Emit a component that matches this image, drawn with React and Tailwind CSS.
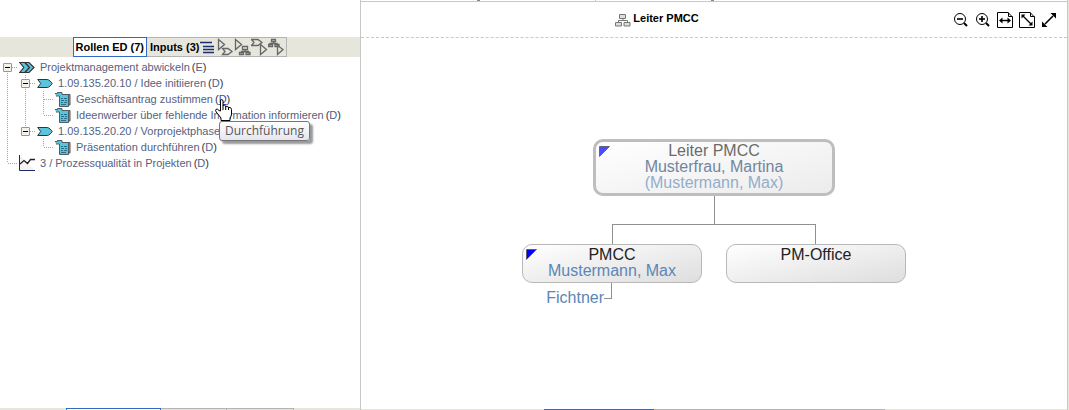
import React, { useState } from "react";

const treeRows = [
  { id: 1, level: 0, icon: "process", label: "Projektmanagement abwickeln", role: "E", open: true, guides: [] },
  { id: 2, level: 1, icon: "phase", label: "1.09.135.20.10 / Idee initiieren", role: "D", open: true, guides: [true] },
  { id: 3, level: 2, icon: "task", label: "Geschäftsantrag zustimmen", role: "D", guides: [true, true], hovered: true },
  { id: 4, level: 2, icon: "task", label: "Ideenwerber über fehlende Information informieren", role: "D", guides: [true, true], last: true },
  { id: 5, level: 1, icon: "phase", label: "1.09.135.20.20 / Vorprojektphase", role: "D", open: true, guides: [true], last: true },
  { id: 6, level: 2, icon: "task", label: "Präsentation durchführen", role: "D", guides: [true, false], last: true },
  { id: 7, level: 0, icon: "chart", label: "3 / Prozessqualität in Projekten", role: "D", guides: [], last: true },
];

const GuideLine = ({ to = 16, branch = false, visible = true }) => (
  <svg className="h-4 w-[18px] shrink-0" viewBox="0 0 18 16" fill="none" stroke="#a9a58e" strokeDasharray="1 1">
    {visible && <path d={`M7.5 0V${to}`} />}
    {branch && <path d="M8 8.5H18" />}
  </svg>
);

const Expander = ({ label, first, last }) => (
  <button type="button" aria-label={`${label} zuklappen`} className="h-4 w-[18px] shrink-0">
    <svg className="h-4 w-[18px]" viewBox="0 0 18 16" fill="none">
      <path
        d={`M7.5 ${first ? 8 : 0}V${last ? 14 : 16}M12 8.5H18`}
        stroke="#a9a58e"
        strokeDasharray="1 1"
      />
      <rect x="3.5" y="4.5" width="8" height="8" rx=".5" fill="#f4f2ea" stroke="#8298b5" />
      <path d="M5 8.5H10" stroke="#000" />
    </svg>
  </button>
);

const NodeIcon = ({ type }) => (
  <svg className="ml-px h-4 w-4 shrink-0" viewBox="0 0 16 16" fill="none">
    {type === "process" && (
      <g fill="#5cc3dd" stroke="#333" strokeWidth="1.2">
        <path d="M.8 3.500h5l5 5-5 5h-5l4-5z" />
        <path d="M6 3.500h4l5 5-5 5H6l4.500-5z" />
      </g>
    )}
    {type === "phase" && (
      <path d="M.7 4.500h9.500c2 0 4 2.500 5 4-1 1.500-3 4-5 4H.7l3-4z" fill="#5cc3dd" stroke="#333" />
    )}
    {type === "task" && (
      <g>
        <path d="M5 3.500h10v10.500H13" fill="#9a9a9a" stroke="#555" />
        <path d="M4.500 3.500h9v12h-9z" fill="#5cc3dd" stroke="#4c5f66" />
        <path d="M0 2.500h2.500v-1H7v3.500H1z" fill="#5cc3dd" />
        <path d="M0 2.500h2.500v-1H7v2M1 5h3.500" stroke="#4c5f66" />
        <path d="M6 7.500h2M9 7.500h3M6 9.500h3M10 9.500h2M6 11.500h2M9 11.500h3M6 13.500h5" stroke="#2a6f86" />
      </g>
    )}
    {type === "chart" && (
      <g>
        <path d="M.5 0v15.500H16" stroke="#1f2b66" fill="#f3f3f3" />
        <path d="M1 9l4-3.500 3.500 3 3-4H16" stroke="#222" strokeWidth="1.300" />
      </g>
    )}
  </svg>
);

const HandCursor = () => (
  <svg
    className="pointer-events-none absolute top-2 left-0 z-20 h-[22px] w-[17px]"
    viewBox="0 0 17 22"
    fill="#fff"
    stroke="#000"
  >
    <path d="M5.500 12V2Q5.500.5 6.500.5 8 .5 8 2v5q0-1 1.500-.7Q10.700 6.500 10.700 8q0-1 1.500-.7 1.300.2 1.300 1.700 0-1 1.500-.5 1.500.5 1.500 2V15q0 2-1.500 4v2.500h-9V19L1.200 13Q0 11 1 10.300q1.500-.8 3 1.200z" />
    <path d="M8 7v4M10.700 8v3M13.500 9v2" />
  </svg>
);

const RoleLink = ({ role, hovered }) => (
  <span className="relative ml-[2px] text-[#333344]">
    (
    <a href="#rolle" className={hovered ? "text-[#4444bb] underline" : "text-[#4c5e8c]"}>
      {role}
    </a>
    )
    {hovered && (
      <>
        <HandCursor />
        <span
          role="tooltip"
          className="absolute top-[30px] left-1 z-10 rounded-[3px] border border-[#767676] bg-linear-to-b from-white to-[#e4e5f0] px-[5px] font-['Open_Sans',sans-serif] text-[12px] leading-[18px] text-[#575757] shadow-[3px_3px_2px_rgba(0,0,0,0.4)]"
        >
          Durchführung
        </span>
      </>
    )}
  </span>
);

const TreeRow = ({ row }) => (
  <li className="flex h-4 items-center whitespace-nowrap">
    {row.guides.map((visible, i) => (
      <GuideLine key={i} visible={visible} />
    ))}
    {row.open ? (
      <Expander label={row.label} first={row.level === 0} last={row.last} />
    ) : (
      <GuideLine to={row.last ? 8 : 16} branch />
    )}
    <NodeIcon type={row.icon} />
    <a href="#prozess" className="ml-[5px] text-[#56627f]">
      {row.label}
    </a>
    <RoleLink role={row.role} hovered={row.hovered} />
  </li>
);

const toolbarIcons = [
  { name: "Folgeprozess", paths: ["M1.500 1.500l6 5-6 5z", "M5.500 10.500h5.500l4 3-4 3H5.500l2.500-3z"] },
  { name: "Folgerolle", paths: ["M1.500 1.500l6 5-6 5z", "M8.500 8.500h5v3h-5zM11 11.500v2M7.500 15.500v-2h7v2M5.500 14.500h4v2h-4zM12 14.500h4v2h-4z"] },
  { name: "Vorprozess", paths: ["M.5 1.500H7l4 3-4 3H.5l2.500-3z", "M9.500 6.500l6 5-6 5z"] },
  { name: "Vorrolle", paths: ["M3.500 1.500h4v2h-4zM5.500 3.500v2M2 7.500v-2h7v2M.5 6.500h4v2h-4zM7 6.500h4v2H7z", "M9.500 7.500l5.500 4-5.500 5z"] },
];

const Toolbar = ({ setTab }) => (
  <div className="flex h-5 items-stretch justify-center bg-[#e6e6dc] text-[11px] font-bold text-black">
    <button
      type="button"
      onClick={() => setTab("rollen")}
      className="border border-[#316ac5] bg-white px-[2px]"
    >
      Rollen ED (7)
    </button>
    <div className="flex items-center border border-l-0 border-[#b4b4b4] pr-px pl-[3px]">
      <button type="button" onClick={() => setTab("inputs")}>
        Inputs (3)
      </button>
      <button type="button" aria-label="Liste" className="mr-[3px] ml-px">
        <svg className="h-4 w-[14px]" viewBox="0 0 14 16" stroke="#1c2f70" strokeWidth="1.400">
          <path d="M0 3.500h12M3 7.500h11M3 10.500h11M3 13.500h11" />
        </svg>
      </button>
      {toolbarIcons.map((icon) => (
        <button key={icon.name} type="button" aria-label={icon.name}>
          <svg className="h-[18px] w-[17px]" viewBox="0 0 17 18" fill="none" stroke="#666" strokeWidth="1.300">
            {icon.paths.map((d) => (
              <path key={d} d={d} />
            ))}
          </svg>
        </button>
      ))}
    </div>
  </div>
);

const OrgIcon = () => (
  <svg className="h-[14px] w-4 shrink-0" viewBox="0 0 16 14" fill="#ddd" stroke="#777">
    <path d="M8 5v2M3.500 9.500v-2h9v2" fill="none" />
    <path d="M4.500 1.500h6v4h-6zM.5 9.500h6v3.500h-6zM9 9.500h6v3.500H9z" />
  </svg>
);

const ZoomIcon = ({ plus }) => (
  <svg className="h-4 w-4" viewBox="0 0 16 16" fill="none" stroke="#000">
    <circle cx="7" cy="7" r="5.500" />
    <path d="M4 7h6" strokeWidth="1.600" />
    {plus && <path d="M7 4v6" strokeWidth="1.600" />}
    <path d="M11 11l3 3" strokeWidth="2" />
  </svg>
);

const PageIcon = ({ diagonal }) => (
  <svg className="h-4 w-4" viewBox="0 0 16 16" fill="none" stroke="#000">
    <path d="M.5.5H11L15.500 5v10.500H.5z" />
    <path d="M11.500.5v4h4" />
    {diagonal ? (
      <>
        <path d="M4 4l8 8" strokeWidth="1.200" />
        <path d="M2.500 2.500h4l-4 4zM13.500 13.500h-4l4-4z" fill="#000" stroke="none" />
      </>
    ) : (
      <>
        <path d="M4 8.500h8" strokeWidth="1.400" />
        <path d="M2 8.500L5.500 5.500v6zM14 8.500l-3.500-3v6z" fill="#000" stroke="none" />
      </>
    )}
  </svg>
);

const FullscreenIcon = () => (
  <svg className="h-4 w-4" viewBox="0 0 16 16">
    <path d="M4 12l8-8" stroke="#000" strokeWidth="1.600" />
    <path d="M15 1v5.500L9.500 1zM1 15V9.500L6.500 15z" />
  </svg>
);

const Marker = ({ fill }) => (
  <svg className="absolute top-1 left-[3px] h-[11px] w-[12px]" viewBox="0 0 12 11">
    <path d="M.5.5h10l-10 10z" fill={fill} stroke="#555" strokeWidth=".8" />
  </svg>
);

const OrgChart = () => (
  <div className="flex flex-1 flex-col items-center pt-[101px] text-center text-[16px] leading-4">
    <div className="relative h-[57px] w-[242px] rounded-[10px] border-3 border-[#bebebe] bg-linear-to-br from-white to-[#ececec] pt-px">
      <Marker fill="#4c4cff" />
      <div className="text-[#6b6b6b]">Leiter PMCC</div>
      <div className="text-[#70869f]">Musterfrau, Martina</div>
      <div className="text-[#93adcb]">(Mustermann, Max)</div>
    </div>

    {/* Connectors */}
    <div className="h-7 w-px bg-[#909090]" />
    <div className="h-5 w-[204px] border border-b-0 border-[#909090]" />

    <div className="flex items-start gap-6">
      <div className="w-[180px]">
        <div className="relative h-[39px] rounded-[10px] border border-[#b8b8b8] bg-linear-to-br from-white to-[#dedede] pt-[2px]">
          <Marker fill="#0000ff" />
          <div className="text-[#222222]">PMCC</div>
          <div className="text-[#5b86b6]">Mustermann, Max</div>
        </div>
        <div className="flex w-1/2 items-start justify-end">
          <span className="pt-[7px] text-[#5b86b6]">Fichtner</span>
          <div className="h-4 w-2 border-r border-b border-[#909090]" />
        </div>
      </div>
      <div className="h-[39px] w-[180px] rounded-[10px] border border-[#b8b8b8] bg-linear-to-br from-white to-[#dedede] pt-[2px] text-[#222222]">
        PM-Office
      </div>
    </div>
  </div>
);

const App = () => {
  const [, setTab] = useState("rollen");

  return (
    <div className="flex min-h-screen bg-white font-['Liberation_Sans',Arial,sans-serif] text-[11px] leading-4">
      {/* Role tree */}
      <aside className="flex w-[360px] shrink-0 flex-col pt-[37px]">
        <Toolbar setTab={setTab} />
        <ul className="pt-[2px]">
          {treeRows.map((row) => (
            <TreeRow key={row.id} row={row} />
          ))}
        </ul>
        <div className="mt-auto flex h-[2px] justify-center bg-[#e6e6dc]">
          <div className="w-[95px] border border-b-0 border-[#316ac5] bg-white" />
          <div className="w-[66px] border-t border-r border-[#b4b4b4]" />
          <div className="w-[67px] border-t border-r border-[#b4b4b4]" />
        </div>
      </aside>

      {/* Organisation chart */}
      <main className="flex flex-1 flex-col border-x border-[#c8c8c8]">
        <div className="flex h-px justify-center gap-[115px]">
          <div className="w-[3px] bg-[#888888]" />
          <div className="w-px bg-[#c8c8c8]" />
          <div className="mr-[238px] w-[3px] bg-[#888888]" />
        </div>
        <header className="flex h-[37px] items-center border-t border-b border-t-[#c8c8c8] border-b-[#c8c8c8] [border-bottom-style:dashed]">
          <h1 className="flex flex-1 items-center justify-center gap-[2px] font-bold text-black">
            <OrgIcon />
            <span className="pb-1">Leiter PMCC</span>
          </h1>
          <div className="flex items-center gap-[6px] pr-[10px]">
            <button type="button" aria-label="Verkleinern">
              <ZoomIcon />
            </button>
            <button type="button" aria-label="Vergrößern">
              <ZoomIcon plus />
            </button>
            <button type="button" aria-label="Seitenbreite">
              <PageIcon />
            </button>
            <button type="button" aria-label="Ganze Seite">
              <PageIcon diagonal />
            </button>
            <button type="button" aria-label="Vollbild">
              <FullscreenIcon />
            </button>
          </div>
        </header>
        <OrgChart />
        <div className="flex h-px justify-center bg-[#e6e6dc]">
          <div className="w-[110px] bg-[#316ac5]" />
          <div className="w-[231px] bg-[#b4b4b4]" />
        </div>
      </main>
      <div className="w-px bg-[#e6e6dc]" />
    </div>
  );
};

export default App;
